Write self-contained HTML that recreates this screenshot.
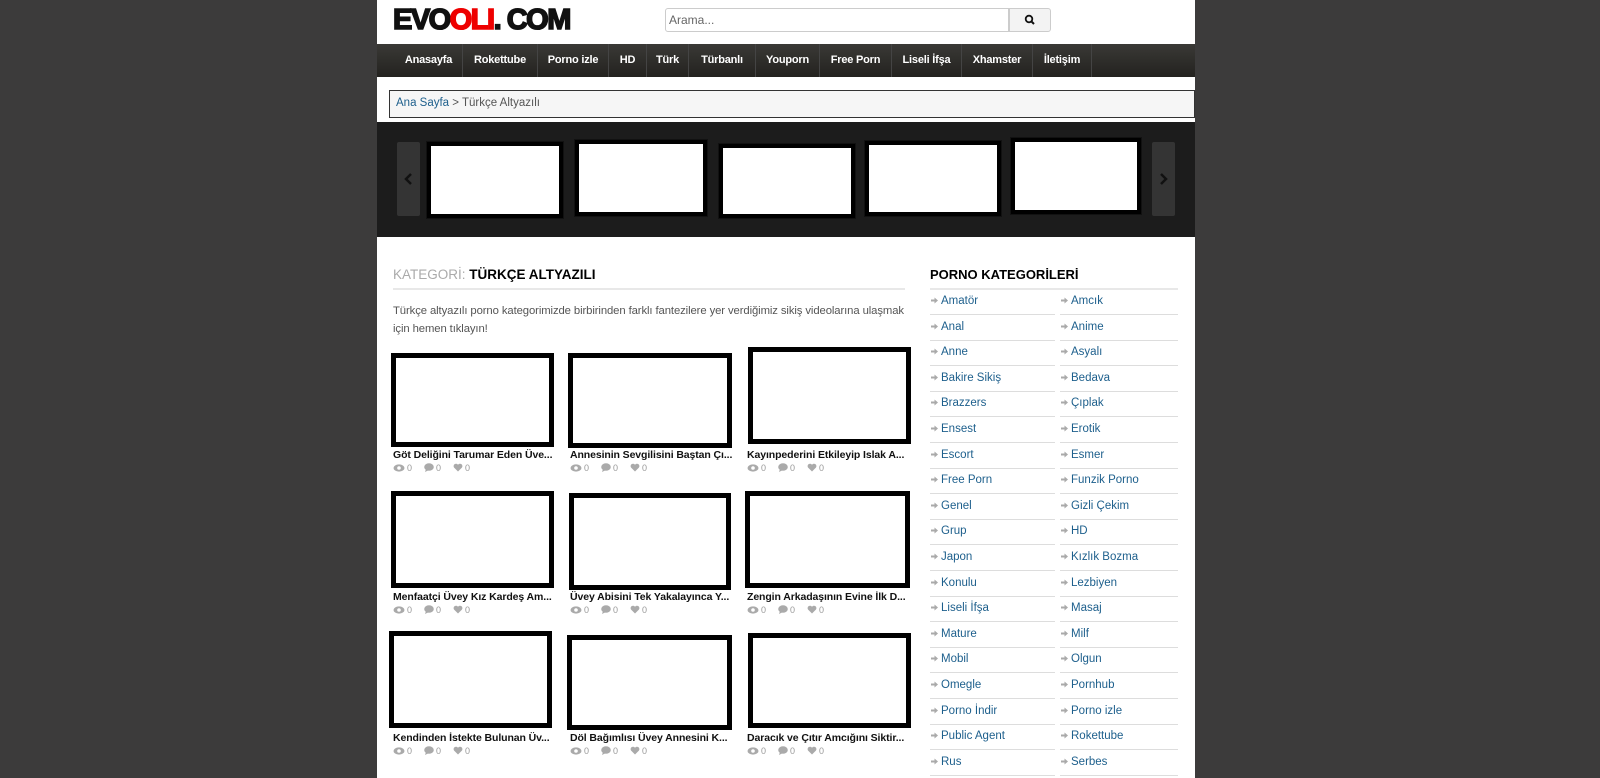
<!DOCTYPE html>
<html><head><meta charset="utf-8"><style>
*{margin:0;padding:0;box-sizing:border-box}
body{width:1600px;height:778px;overflow:hidden;background:#3c3b3b;font-family:"Liberation Sans",Arial,sans-serif;position:relative}
#w{position:absolute;left:377px;top:0;width:818px;height:778px;background:#fff}
.a{position:absolute}
.logo{left:16px;top:4px;font:bold 29px "Liberation Sans",sans-serif;letter-spacing:-1.5px;color:#111;-webkit-text-stroke:1.6px #111}
.logo b{color:#e00;-webkit-text-stroke:1.6px #e00}
.search{left:288px;top:8px;width:344px;height:24px;border:1px solid #ccc;border-radius:3px 0 0 3px;font-size:12px;color:#666;padding:4px 3px}
.sbtn{left:632px;top:8px;width:42px;height:24px;border:1px solid #ccc;background:#f3f3f3;border-radius:0 3px 3px 0}
.nav{left:0;top:44px;width:818px;height:33px;background:linear-gradient(#3a3936,#23221f)}
.nav span{position:absolute;top:0;height:33px;line-height:32px;color:#fff;font-weight:bold;font-size:11px;letter-spacing:-0.2px;text-align:center;border-right:1px solid #444}
.bc{left:12px;top:90px;width:806px;height:28px;border:1px solid #333;background:#f6f6f6;font-size:11.5px;color:#555;line-height:25px;padding-left:6px}
.bc a{color:#1d5f8c;text-decoration:none}
.sl{left:0;top:122px;width:818px;height:115px;background:#1c1c1c}
.arr{top:20px;width:23px;height:74px;background:#343434;border-radius:2px}
.st{background:#fff;border:4px solid #000;outline:1px solid #111}
.th{background:#fff;border:5px solid #000}
.tt{font-size:10.5px;font-weight:bold;color:#111;white-space:nowrap;letter-spacing:-0.1px}
.mt{font-size:9px;color:#999;white-space:nowrap}
.mt svg{vertical-align:-1px;margin-right:2px}
.mt s{text-decoration:none;margin-right:12px}
.h{font-size:14px;color:#000;font-weight:bold}
.line{height:2px;background:#e8e8e8}
.cat{font-size:11.5px;color:#1d5f8c;white-space:nowrap}
.cat svg{margin-right:3px;vertical-align:0}
.sep{height:1px;background:#ddd}
</style></head><body>
<div id="w">
<div class="a logo">EVO<b>OLI</b>. COM</div>
<div class="a search">Arama...</div>
<div class="a sbtn"><svg width="40" height="22"><circle cx="19" cy="10" r="3.3" fill="none" stroke="#111" stroke-width="1.8"/><line x1="21.5" y1="12.5" x2="24" y2="15" stroke="#111" stroke-width="2"/></svg></div>
<div class="a nav">
<span style="left:18px;width:68px">Anasayfa</span><span style="left:86px;width:75px">Rokettube</span><span style="left:161px;width:71px">Porno izle</span><span style="left:232px;width:38px">HD</span><span style="left:270px;width:42px">Türk</span><span style="left:312px;width:67px">Türbanlı</span><span style="left:379px;width:64px">Youporn</span><span style="left:443px;width:72px">Free Porn</span><span style="left:515px;width:70px">Liseli İfşa</span><span style="left:585px;width:71px">Xhamster</span><span style="left:656px;width:59px">İletişim</span>
</div>
<div class="a bc"><a>Ana Sayfa</a> &gt; Türkçe Altyazılı</div>
<div class="a sl">
<div class="a arr" style="left:20px"><svg width="23" height="74"><path d="M14 32 L9 37 L14 42" fill="none" stroke="#111" stroke-width="2.5"/></svg></div>
<div class="a st" style="left:50px;top:20px;width:136px;height:76px"></div>
<div class="a st" style="left:198px;top:18px;width:132px;height:76px"></div>
<div class="a st" style="left:342px;top:22px;width:136px;height:74px"></div>
<div class="a st" style="left:488px;top:19px;width:136px;height:75px"></div>
<div class="a st" style="left:634px;top:16px;width:130px;height:76px"></div>
<div class="a arr" style="left:775px"><svg width="23" height="74"><path d="M9 32 L14 37 L9 42" fill="none" stroke="#111" stroke-width="2.5"/></svg></div>
</div>
<div class="a h" style="left:16px;top:267px;font-size:13.5px"><span style="color:#aaa;font-weight:normal">KATEGORİ:</span> TÜRKÇE ALTYAZILI</div>
<div class="a line" style="left:16px;top:288px;width:512px"></div>
<div class="a" style="left:16px;top:302px;width:520px;font-size:11.3px;color:#555;line-height:18px;letter-spacing:-0.1px">Türkçe altyazılı porno kategorimizde birbirinden farklı fantezilere yer verdiğimiz sikiş videolarına ulaşmak<br>için hemen tıklayın!</div>

<div class="a th" style="left:14px;top:353px;width:163px;height:94px"></div>
<div class="a th" style="left:191px;top:353px;width:164px;height:95px"></div>
<div class="a th" style="left:371px;top:347px;width:163px;height:97px"></div>
<div class="a tt" style="left:16px;top:449px">Göt Deliğini Tarumar Eden Üve...</div>
<div class="a tt" style="left:193px;top:449px">Annesinin Sevgilisini Baştan Çı...</div>
<div class="a tt" style="left:370px;top:449px">Kayınpederini Etkileyip Islak A...</div>
<div class="a tt" style="left:16px;top:591px">Menfaatçi Üvey Kız Kardeş Am...</div>
<div class="a tt" style="left:193px;top:591px">Üvey Abisini Tek Yakalayınca Y...</div>
<div class="a tt" style="left:370px;top:591px">Zengin Arkadaşının Evine İlk D...</div>
<div class="a tt" style="left:16px;top:732px">Kendinden İstekte Bulunan Üv...</div>
<div class="a tt" style="left:193px;top:732px">Döl Bağımlısı Üvey Annesini K...</div>
<div class="a tt" style="left:370px;top:732px">Daracık ve Çıtır Amcığını Siktir...</div>

<div class="a th" style="left:14px;top:491px;width:163px;height:97px"></div>
<div class="a th" style="left:192px;top:493px;width:162px;height:97px"></div>
<div class="a th" style="left:368px;top:491px;width:165px;height:97px"></div>
<div class="a th" style="left:12px;top:631px;width:163px;height:97px"></div>
<div class="a th" style="left:190px;top:635px;width:165px;height:95px"></div>
<div class="a th" style="left:371px;top:633px;width:163px;height:95px"></div>
<div id="meta"></div>

<div class="a h" style="left:553px;top:267px;font-size:13px">PORNO KATEGORİLERİ</div>
<div class="a line" style="left:553px;top:288px;width:248px"></div>
<div id="cats"></div>
</div>
<script>
var eye='<svg width="12" height="8"><ellipse cx="6" cy="4" rx="5.5" ry="3.6" fill="#aaa"/><circle cx="6" cy="4" r="1.8" fill="#fff"/></svg>';
var bub='<svg width="10" height="9"><ellipse cx="5" cy="4" rx="4.8" ry="3.8" fill="#aaa"/><path d="M2 6 L1 9 L5 7z" fill="#aaa"/></svg>';
var hrt='<svg width="10" height="9"><path d="M5 8.5 L1 4.5 A2.2 2.2 0 0 1 5 1.8 A2.2 2.2 0 0 1 9 4.5z" fill="#aaa"/></svg>';
var m="",xs=[16,193,370],ys=[463,605,746];
for(var r=0;r<3;r++)for(var k=0;k<3;k++)m+='<div class="a mt" style="left:'+xs[k]+'px;top:'+ys[r]+'px">'+eye+'<s>0</s>'+bub+'<s>0</s>'+hrt+'0</div>';
document.getElementById("meta").innerHTML=m;
var c=["Amatör","Amcık","Anal","Anime","Anne","Asyalı","Bakire Sikiş","Bedava","Brazzers","Çıplak","Ensest","Erotik","Escort","Esmer","Free Porn","Funzik Porno","Genel","Gizli Çekim","Grup","HD","Japon","Kızlık Bozma","Konulu","Lezbiyen","Liseli İfşa","Masaj","Mature","Milf","Mobil","Olgun","Omegle","Pornhub","Porno İndir","Porno izle","Public Agent","Rokettube","Rus","Serbes"];
var ar='<svg width="7" height="7"><path d="M0 2.5 H3.5 V0.5 L7 3.5 L3.5 6.5 V4.5 H0z" fill="#aaa"/></svg>';
var h="";for(var i=0;i<c.length;i++){var r=Math.floor(i/2),x=i%2?683:553,y=295+r*25.6;
h+='<div class="a cat" style="left:'+(x+1)+'px;top:'+y+'px">'+ar+c[i]+'</div>';
h+='<div class="a sep" style="left:'+x+'px;top:'+(y+19)+'px;width:'+(i%2?118:125)+'px"></div>';}
document.getElementById("cats").innerHTML=h;
</script>
</body></html>
